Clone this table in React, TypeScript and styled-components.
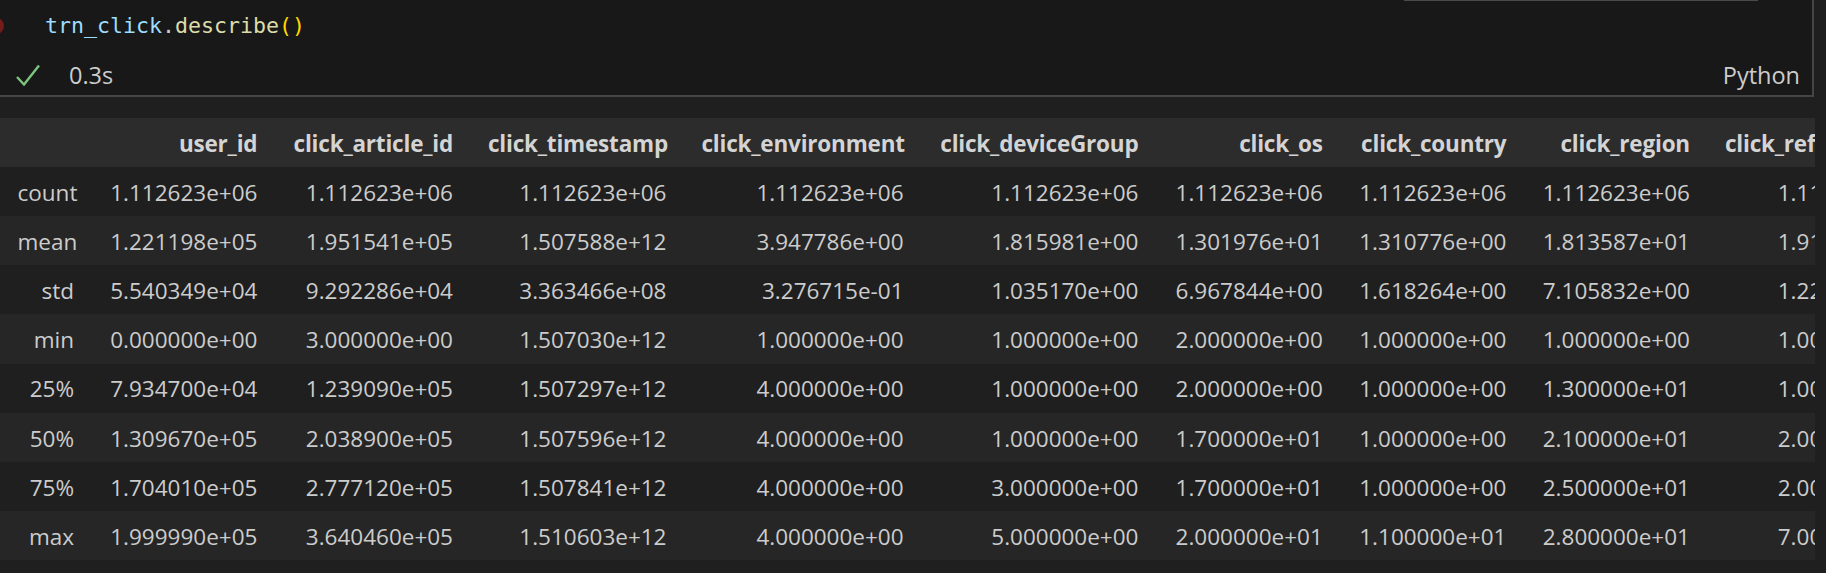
import React from "react";
import styled, { createGlobalStyle } from "styled-components";

const Global = createGlobalStyle`
  html, body { margin: 0; padding: 0; background: #1f1f1f; }
  body { width: 1826px; height: 573px; overflow: hidden; font-family: "Open Sans", "Noto Sans", sans-serif; }
`;

const Page = styled.div`
  position: relative;
  width: 1826px;
  height: 573px;
  background: #1f1f1f;
  overflow: hidden;
`;

const CodeCell = styled.section`
  position: relative;
  width: 1812px;
  height: 95px;
  background: #181818;
  border-right: 2px solid #454545;
  border-bottom: 2px solid #454545;
  display: flex;
  flex-direction: column;
`;

const Breakpoint = styled.span`
  position: absolute;
  left: -12px;
  top: 18px;
  width: 16px;
  height: 16px;
  border-radius: 50%;
  background: #741b1b;
`;

const TopEdge = styled.span`
  position: absolute;
  left: 1404px;
  top: 0;
  width: 354px;
  height: 1px;
  background: #4a4a4a;
`;

const CodeLine = styled.div`
  padding: 12px 0 0 45px;
  height: 27px;
  line-height: 27px;
  font-family: "DejaVu Sans Mono", "Liberation Mono", monospace;
  font-size: 21.6px;
  white-space: pre;
`;

const Tok = styled.span<{ $c: string }>`
  color: ${(p) => p.$c};
`;

const StatusRow = styled.div`
  display: flex;
  align-items: center;
  height: 40px;
  padding: 16px 12px 0 16px;
  font-size: 23.5px;
  color: #cccccc;
`;

const Check = styled.svg`
  width: 24px;
  height: 22px;
  flex: none;
`;

const Duration = styled.span`
  margin-left: 29px;
`;

const Lang = styled.span`
  margin-left: auto;
  color: #cccccc;
`;

const Output = styled.div`
  padding-top: 20.7px;
  width: 1815px;
  overflow: hidden;
`;

const COLS = [91.5, 183.4, 195.6, 213.5, 237.1, 234.9, 184.3, 183.7, 183.5, 235];

const Row = styled.div<{ $head?: boolean }>`
  display: grid;
  grid-template-columns: ${COLS.map((c) => `${c}px`).join(" ")};
  width: max-content;
  height: 49.2px;
  align-items: center;
  font-size: 22.5px;
  font-weight: ${(p) => (p.$head ? 700 : 400)};
  letter-spacing: ${(p) => (p.$head ? "-0.2px" : "0")};
  color: ${(p) => (p.$head ? "#d4d4d4" : "#cccccc")};
  background: ${(p) => (p.$head ? "#2c2c2c" : "#1f1f1f")};
  &:nth-child(odd) {
    background: ${(p) => (p.$head ? "#2c2c2c" : "#262626")};
  }
`;

const Cell = styled.div<{ $head?: boolean }>`
  padding: ${(p) => (p.$head ? "3px" : "1.5px")} 17.5px 0;
  text-align: right;
  white-space: nowrap;
  overflow: visible;
`;

const headers = [
  "",
  "user_id",
  "click_article_id",
  "click_timestamp",
  "click_environment",
  "click_deviceGroup",
  "click_os",
  "click_country",
  "click_region",
  "click_referrer_type",
];

const rows: string[][] = [
  ["count", "1.112623e+06", "1.112623e+06", "1.112623e+06", "1.112623e+06", "1.112623e+06", "1.112623e+06", "1.112623e+06", "1.112623e+06", "1.112623e+06"],
  ["mean", "1.221198e+05", "1.951541e+05", "1.507588e+12", "3.947786e+00", "1.815981e+00", "1.301976e+01", "1.310776e+00", "1.813587e+01", "1.910254e+00"],
  ["std", "5.540349e+04", "9.292286e+04", "3.363466e+08", "3.276715e-01", "1.035170e+00", "6.967844e+00", "1.618264e+00", "7.105832e+00", "1.220754e+00"],
  ["min", "0.000000e+00", "3.000000e+00", "1.507030e+12", "1.000000e+00", "1.000000e+00", "2.000000e+00", "1.000000e+00", "1.000000e+00", "1.000000e+00"],
  ["25%", "7.934700e+04", "1.239090e+05", "1.507297e+12", "4.000000e+00", "1.000000e+00", "2.000000e+00", "1.000000e+00", "1.300000e+01", "1.000000e+00"],
  ["50%", "1.309670e+05", "2.038900e+05", "1.507596e+12", "4.000000e+00", "1.000000e+00", "1.700000e+01", "1.000000e+00", "2.100000e+01", "2.000000e+00"],
  ["75%", "1.704010e+05", "2.777120e+05", "1.507841e+12", "4.000000e+00", "3.000000e+00", "1.700000e+01", "1.000000e+00", "2.500000e+01", "2.000000e+00"],
  ["max", "1.999990e+05", "3.640460e+05", "1.510603e+12", "4.000000e+00", "5.000000e+00", "2.000000e+01", "1.100000e+01", "2.800000e+01", "7.000000e+00"],
];

export default function App() {
  return (
    <Page>
      <Global />
      <CodeCell>
        <Breakpoint />
        <TopEdge />
        <CodeLine>
          <Tok $c="#9cdcfe">trn_click</Tok>
          <Tok $c="#cccccc">.</Tok>
          <Tok $c="#dcdcaa">describe</Tok>
          <Tok $c="#ffd700">()</Tok>
        </CodeLine>
        <StatusRow>
          <Check viewBox="0 0 24 22">
            <polyline points="1,13 8,20.5 23,1.5" fill="none" stroke="#7cc47f" strokeWidth="2.4" />
          </Check>
          <Duration>0.3s</Duration>
          <Lang>Python</Lang>
        </StatusRow>
      </CodeCell>
      <Output>
        <Row $head>
          {headers.map((h, i) => (
            <Cell key={i} $head>
              {h}
            </Cell>
          ))}
        </Row>
        {rows.map((r, ri) => (
          <Row key={ri}>
            {r.map((v, ci) => (
              <Cell key={ci}>{v}</Cell>
            ))}
          </Row>
        ))}
      </Output>
    </Page>
  );
}
